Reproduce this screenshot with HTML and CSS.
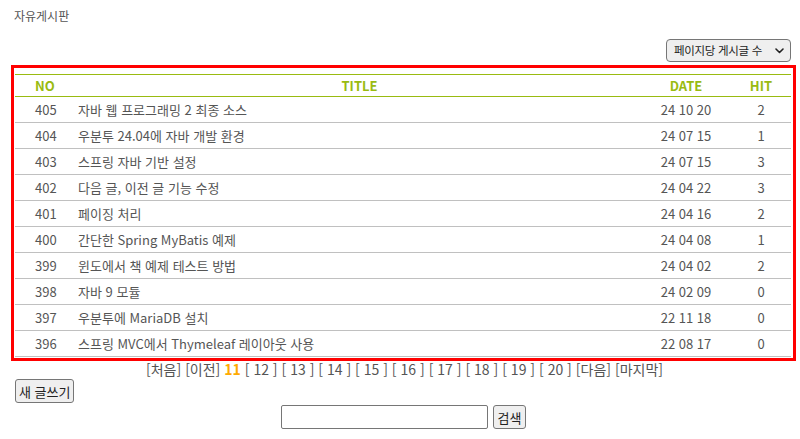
FILE: index.html
```html
<!DOCTYPE html>
<html lang="ko">
<head>
<meta charset="utf-8">
<title>자유게시판</title>
<link rel="stylesheet" href="styles.css">
</head>
<body>
<div class="page">
  <h1 class="title">자유게시판</h1>
  <div class="toolbar">
    <div class="select-wrap">
      <select class="per-page">
        <option>페이지당 게시글 수</option>
      </select>
      <svg class="chev" width="9" height="6" viewBox="0 0 9 6" aria-hidden="true">
        <path d="M1 1 L4.5 4.5 L8 1" fill="none" stroke="#222" stroke-width="1.6" stroke-linecap="round" stroke-linejoin="round"/>
      </svg>
    </div>
  </div>
  <div class="board">
    <table class="list">
      <thead>
        <tr><th class="c-no">NO</th><th class="c-title">TITLE</th><th class="c-date">DATE</th><th class="c-hit">HIT</th></tr>
      </thead>
      <tbody>
        <tr><td class="c-no">405</td><td class="c-title">자바 웹 프로그래밍 2 최종 소스</td><td class="c-date">24 10 20</td><td class="c-hit">2</td></tr>
        <tr><td class="c-no">404</td><td class="c-title">우분투 24.04에 자바 개발 환경</td><td class="c-date">24 07 15</td><td class="c-hit">1</td></tr>
        <tr><td class="c-no">403</td><td class="c-title">스프링 자바 기반 설정</td><td class="c-date">24 07 15</td><td class="c-hit">3</td></tr>
        <tr><td class="c-no">402</td><td class="c-title">다음 글, 이전 글 기능 수정</td><td class="c-date">24 04 22</td><td class="c-hit">3</td></tr>
        <tr><td class="c-no">401</td><td class="c-title">페이징 처리</td><td class="c-date">24 04 16</td><td class="c-hit">2</td></tr>
        <tr><td class="c-no">400</td><td class="c-title">간단한 Spring MyBatis 예제</td><td class="c-date">24 04 08</td><td class="c-hit">1</td></tr>
        <tr><td class="c-no">399</td><td class="c-title">윈도에서 책 예제 테스트 방법</td><td class="c-date">24 04 02</td><td class="c-hit">2</td></tr>
        <tr><td class="c-no">398</td><td class="c-title">자바 9 모듈</td><td class="c-date">24 02 09</td><td class="c-hit">0</td></tr>
        <tr><td class="c-no">397</td><td class="c-title">우분투에 MariaDB 설치</td><td class="c-date">22 11 18</td><td class="c-hit">0</td></tr>
        <tr><td class="c-no">396</td><td class="c-title">스프링 MVC에서 Thymeleaf 레이아웃 사용</td><td class="c-date">22 08 17</td><td class="c-hit">0</td></tr>
      </tbody>
    </table>
  </div>
  <div class="pager">
    <a>[처음]</a> <a>[이전]</a> <b class="current">11</b> <a>[ 12 ]</a> <a>[ 13 ]</a> <a>[ 14 ]</a> <a>[ 15 ]</a> <a>[ 16 ]</a> <a>[ 17 ]</a> <a>[ 18 ]</a> <a>[ 19 ]</a> <a>[ 20 ]</a> <a>[다음]</a> <a>[마지막]</a>
  </div>
  <div class="actions">
    <button class="btn">새 글쓰기</button>
  </div>
  <form class="search">
    <input class="search-input" type="text">
    <button class="btn btn-search" type="button">검색</button>
  </form>
</div>
</body>
</html>
```

FILE: styles.css
```css
html, body {
  margin: 0;
  padding: 0;
  background: #fff;
}
body {
  font-family: "Noto Sans CJK KR", "Noto Sans", sans-serif;
  color: #555;
  font-size: 13px;
}
.page {
  padding: 8px 4px 0 11px;
}
.title {
  margin: 0 0 0 3px;
  font-size: 12px;
  font-weight: normal;
  line-height: 16px;
  color: #555;
}
.toolbar {
  display: flex;
  justify-content: flex-end;
  margin-top: 15px;
  padding-right: 5px;
}
.select-wrap {
  position: relative;
  display: flex;
}
.per-page {
  -webkit-appearance: none;
  appearance: none;
  font-family: "Noto Sans CJK KR", sans-serif;
  font-size: 11.5px;
  letter-spacing: -0.3px;
  line-height: 21px;
  height: 23px;
  width: 125px;
  color: #222;
  border: 1px solid #767676;
  border-radius: 4px;
  background: #efefef;
  padding: 0 16px 0 7px;
  box-sizing: border-box;
}
.chev {
  position: absolute;
  right: 7px;
  top: 9px;
  pointer-events: none;
}
.board {
  margin-top: 3px;
  border: 3px solid #ff0000;
  padding: 6px 2px 1px 1px;
}
.list {
  width: 100%;
  border-collapse: collapse;
  border-bottom: 1px solid #c8c8c8;
}
.list th {
  color: #99bb11;
  font-weight: bold;
  font-size: 13px;
  height: 21px;
  line-height: 21px;
  padding: 0;
  border-top: 1px solid #99bb11;
  border-bottom: 1px solid #99bb11;
}
.list td {
  height: 25px;
  line-height: 25px;
  padding: 0;
  border-bottom: 1px solid #c0c0c0;
}
.c-no {
  width: 43px;
  padding-left: 20px !important;
  text-align: left;
}
.list td.c-title {
  text-align: left;
}
.list th.c-title {
  text-align: center;
}
.c-date {
  width: 90px;
  text-align: center;
}
.c-hit {
  width: 60px;
  text-align: center;
}
.pager {
  text-align: center;
  font-size: 14px;
  line-height: 16px;
  margin-top: 0;
  padding-left: 2px;
  color: #555;
}
.pager a {
  color: #555;
}
.pager .current {
  color: #ffaa00;
}
.actions {
  margin-top: 2px;
  padding-left: 4px;
}
.btn {
  font-family: "Noto Sans CJK KR", sans-serif;
  font-size: 13px;
  color: #222;
  height: 24px;
  padding: 0 3px;
  border: 1px solid #767676;
  border-radius: 3px;
  background: #efefef;
}
.btn-search {
  padding: 0 4px;
}
.search {
  display: flex;
  justify-content: center;
  gap: 5px;
  margin-top: 2px;
}
.search-input {
  width: 207px;
  height: 24px;
  box-sizing: border-box;
  border: 1px solid #767676;
  border-radius: 2px;
  padding: 0 4px;
}
```
